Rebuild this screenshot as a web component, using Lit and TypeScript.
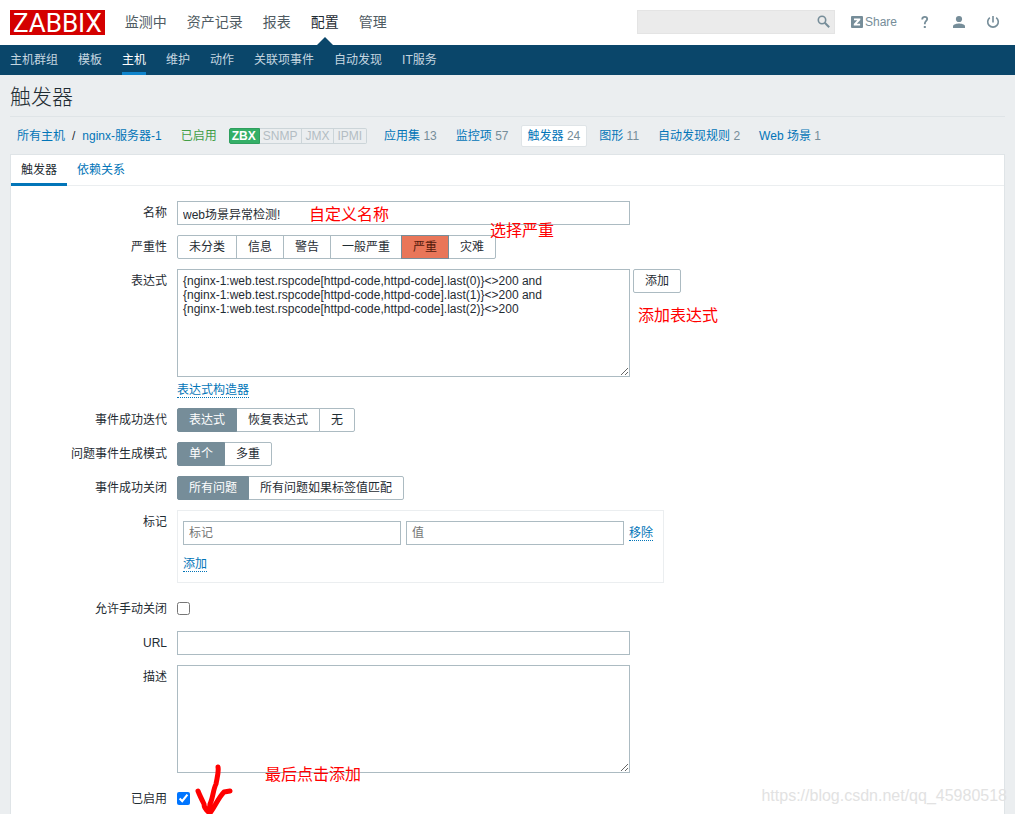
import { LitElement, html, css, svg } from "lit";
import { customElement, property, state } from "lit/decorators.js";
import { classMap } from "lit/directives/class-map.js";

const base = css`
  *,
  *::before,
  *::after {
    box-sizing: border-box;
  }
  a {
    color: #0275b8;
    text-decoration: none;
  }
  ul {
    list-style: none;
    margin: 0;
    padding: 0;
  }
`;

interface Choice {
  label: string;
  tone?: string;
}

@customElement("segmented-choice")
export class SegmentedChoice extends LitElement {
  static styles = [
    base,
    css`
      :host {
        display: flex;
      }
      .group {
        display: flex;
        border: 0;
        margin: 0;
        padding: 0;
        min-width: 0;
      }
      .item {
        position: relative;
        height: 24px;
        padding: 0 11px;
        border: 1px solid #acbbc2;
        line-height: 22px;
        background: #fff;
        cursor: pointer;
        white-space: nowrap;
      }
      .item + .item {
        margin-left: -1px;
      }
      .item:first-child {
        border-radius: 2px 0 0 2px;
      }
      .item:last-child {
        border-radius: 0 2px 2px 0;
      }
      .item.on {
        z-index: 1;
        background: #768d99;
        border-color: #768d99;
        color: #fff;
      }
      .item.on.high {
        background: #e97659;
        color: #52190b;
      }
      .radio {
        position: absolute;
        inset: 0;
        width: 100%;
        height: 100%;
        margin: 0;
        opacity: 0;
        cursor: pointer;
      }
    `,
  ];

  @property() label = "";
  @property({ attribute: false }) choices: Choice[] = [];
  @property({ type: Number }) selected = 0;

  render() {
    return html`<div class="group" role="radiogroup" aria-label=${this.label}>
      ${this.choices.map(
        (c, i) => html`<label
          class=${classMap({ item: true, on: i === this.selected, high: c.tone === "high" })}
          ><input
            class="radio"
            type="radio"
            name="choice"
            .checked=${i === this.selected}
            @change=${() => (this.selected = i)}
          />${c.label}</label
        >`
      )}
    </div>`;
  }
}

const severities: Choice[] = [
  { label: "未分类" },
  { label: "信息" },
  { label: "警告" },
  { label: "一般严重" },
  { label: "严重", tone: "high" },
  { label: "灾难" },
];

const hostLinks = [
  { label: "应用集", count: 13 },
  { label: "监控项", count: 57 },
  { label: "触发器", count: 24, current: true },
  { label: "图形", count: 11 },
  { label: "自动发现规则", count: 2 },
  { label: "Web 场景", count: 1 },
];

const expression = [
  "{nginx-1:web.test.rspcode[httpd-code,httpd-code].last(0)}<>200 and",
  "{nginx-1:web.test.rspcode[httpd-code,httpd-code].last(1)}<>200 and",
  "{nginx-1:web.test.rspcode[httpd-code,httpd-code].last(2)}<>200",
].join("\n");

@customElement("app-root")
export class AppRoot extends LitElement {
  static styles = [
    base,
    css`
      :host {
        position: relative;
        display: flex;
        flex-direction: column;
        min-height: 100vh;
        overflow: hidden;
        background: #ebeef0;
        color: #1f2c33;
        font: 12px/14px "Liberation Sans", "Noto Sans CJK SC", sans-serif;
      }
      input,
      textarea,
      button {
        font: inherit;
        color: inherit;
      }

      .header {
        display: flex;
        align-items: center;
        height: 45px;
        padding: 0 15px 1px 10px;
        background: #fff;
      }
      .logo {
        height: 25px;
        padding: 0 3px;
        background: #d40000;
        color: #fff;
        font: 26px/26px Roboto, sans-serif;
      }
      .menu {
        display: flex;
        flex: 1;
        align-self: flex-start;
        gap: 20px;
        margin-left: 20px;
        font-size: 14px;
        line-height: 45px;
      }
      .menu a {
        display: block;
        position: relative;
        color: #4f5b62;
      }
      .menu .current {
        color: #1f2c33;
      }
      .menu .current::after {
        content: "";
        position: absolute;
        left: 50%;
        bottom: 0;
        margin-left: -8px;
        border: 8px solid transparent;
        border-top: 0;
        border-bottom-color: #0a466a;
      }
      .search {
        position: relative;
        width: 198px;
        height: 24px;
        margin-right: 16px;
      }
      .search-box {
        display: block;
        width: 100%;
        height: 24px;
        padding: 0 24px 0 5px;
        border: 1px solid #e4e4e4;
        border-radius: 0;
        background: #ebebeb;
      }
      .search-button {
        position: absolute;
        right: 4px;
        top: 5px;
        width: 14px;
        height: 14px;
        padding: 0;
        border: 0;
        background: none;
      }
      .tools {
        display: flex;
        align-items: center;
        gap: 21px;
      }
      .tools a {
        display: flex;
        align-items: center;
        gap: 2px;
        color: #768d99;
      }
      svg {
        display: block;
      }

      .submenu {
        display: flex;
        gap: 20px;
        height: 30px;
        padding: 0 10px;
        background: #0a466a;
      }
      .submenu a {
        display: block;
        height: 30px;
        line-height: 30px;
        color: #c5d6e0;
        border-bottom: 3px solid transparent;
      }
      .submenu .current {
        color: #fff;
        border-color: #0f84cc;
      }

      .title {
        margin: 0 10px;
        padding: 10px 0 7px;
        border-bottom: 1px solid #dfe4e7;
        font-size: 21px;
        line-height: 24px;
        font-weight: 300;
      }
      .crumbs {
        display: flex;
        flex-wrap: wrap;
        margin: 8px 10px 7px;
        line-height: 20px;
      }
      .crumb {
        padding: 0 6px;
        border: 1px solid transparent;
      }
      .slash {
        padding: 1px 0;
      }
      .status {
        margin-left: 5px;
        color: #429e47;
      }
      .badges {
        display: flex;
        margin: 3px 5px 3px 5px;
        line-height: 14px;
      }
      .badge {
        padding: 0 4px 0 3px;
        border: 1px solid #ccd5d9;
        border-left: 0;
        color: #b3bdc3;
      }
      .badge:first-child {
        padding: 0 3px 0 2px;
        border: 1px solid #2f9f5e;
        border-radius: 2px 0 0 2px;
        background: #34af67;
        color: #fff;
        font-weight: 700;
      }
      .badge:last-child {
        border-radius: 0 2px 2px 0;
      }
      .links {
        display: flex;
        flex-wrap: wrap;
        gap: 5px;
        margin-left: 5px;
      }
      .links .current {
        background: #fff;
        border-color: #dfe4e7;
        border-radius: 2px;
      }
      .count {
        color: #768d99;
      }

      .card {
        flex: 1;
        margin: 0 10px;
        border: 1px solid #dfe4e7;
        border-bottom: 0;
        background: #fff;
      }
      .tabs {
        display: flex;
        height: 31px;
        border-bottom: 1px solid #ebeef0;
      }
      .tabs a {
        height: 31px;
        padding: 0 10px;
        line-height: 30px;
      }
      .tabs .current {
        color: #1f2c33;
        border-bottom: 3px solid #0275b8;
      }

      .form {
        display: grid;
        gap: 10px;
        padding-top: 15px;
      }
      .row {
        display: grid;
        grid-template-columns: 156px minmax(0, 1fr);
        column-gap: 10px;
      }
      .row.tick {
        padding-top: 4px;
      }
      .name {
        line-height: 24px;
        text-align: right;
      }
      .field {
        display: flex;
        gap: 3px;
        align-items: flex-start;
      }
      .field.stack {
        flex-direction: column;
        gap: 6px;
      }
      .line {
        display: flex;
        gap: 3px;
        align-items: flex-start;
        width: 100%;
      }
      .text,
      .area {
        display: block;
        width: 100%;
        max-width: 453px;
        height: 24px;
        margin: 0;
        padding: 0 5px;
        border: 1px solid #acbbc2;
        border-radius: 0;
        background: #fff;
      }
      .area {
        height: 108px;
        padding: 4px 5px;
        line-height: 14px;
      }
      .text::placeholder {
        color: #757575;
      }
      .button {
        height: 24px;
        padding: 0 11px;
        border: 1px solid #acbbc2;
        border-radius: 2px;
        background: #fff;
        line-height: 22px;
        white-space: nowrap;
      }
      .action {
        padding: 0;
        border: 0;
        border-bottom: 1px dotted #0275b8;
        background: none;
        color: #0275b8;
        line-height: 14px;
        white-space: nowrap;
      }
      .tags {
        display: grid;
        justify-items: start;
        gap: 12px;
        padding: 10px 10px 10px 5px;
        border: 1px solid #ebeef0;
      }
      .tag {
        display: flex;
        align-items: center;
        gap: 5px;
      }
      .tag .text {
        width: 218px;
      }
      .check {
        width: 13px;
        height: 13px;
        margin: 5px 0;
      }

      .note {
        position: absolute;
        color: #f00;
        font-size: 16px;
        line-height: 20px;
        white-space: nowrap;
        pointer-events: none;
      }
      .note.custom {
        left: 309px;
        top: 205px;
      }
      .note.pick {
        left: 490px;
        top: 221px;
      }
      .note.expr {
        left: 638px;
        top: 306px;
      }
      .note.finish {
        left: 265px;
        top: 765px;
      }
      .arrow {
        position: absolute;
        left: 190px;
        top: 760px;
        pointer-events: none;
      }
      .watermark {
        position: absolute;
        right: 8px;
        top: 786px;
        color: #e2e2e2;
        font-size: 16px;
        line-height: 20px;
        pointer-events: none;
      }
    `,
  ];

  @state() private manualClose = false;
  @state() private enabled = true;

  private icon(body: unknown, w = 14) {
    return html`<svg width=${w} height="14" viewBox="0 0 ${w} 14" aria-hidden="true">${body}</svg>`;
  }

  private header() {
    return html`<header class="header">
        <a class="logo" href="#">ZABBIX</a>
        <nav class="menu">
          ${["监测中", "资产记录", "报表", "配置", "管理"].map(
            (m) => html`<a href="#" class=${classMap({ current: m === "配置" })}>${m}</a>`
          )}
        </nav>
        <form class="search" @submit=${(e: Event) => e.preventDefault()}>
          <input class="search-box" type="text" aria-label="搜索" />
          <button class="search-button" aria-label="搜索">
            ${this.icon(svg`<circle cx="5" cy="5" r="3.7" fill="none" stroke="#768d99" stroke-width="1.6"/>
              <path d="M7.8 7.8 12.2 12.2" stroke="#768d99" stroke-width="2"/>`)}
          </button>
        </form>
        <div class="tools">
          <a href="#">
            ${this.icon(
              svg`<rect y="1" width="12" height="12" rx="1" fill="#768d99"/>
              <path d="M3 3.5h6.3v1.6L5.8 8.8h3.3v1.8H2.8V9l3.4-3.7H3z" fill="#fff"/>`,
              12
            )}Share</a
          >
          <a href="#" aria-label="帮助">
            ${this.icon(svg`<path d="M4.2 4.4C4.2 2.6 5.3 1.9 6.7 1.9 8.2 1.9 9.2 2.7 9.2 4.1 9.2 5.9 6.8 6.2 6.8 8.8V9.2" fill="none" stroke="#768d99" stroke-width="1.8"/>
              <rect x="5.8" y="11" width="2" height="2" fill="#768d99"/>`)}</a
          >
          <a href="#" aria-label="用户">
            ${this.icon(
              svg`<circle cx="6" cy="4" r="3.1" fill="#768d99"/>
              <path d="M0 13v-1.6C0 9.4 4 8.6 6 8.6s6 .8 6 2.8V13z" fill="#768d99"/>`,
              12
            )}</a
          >
          <a href="#" aria-label="退出">
            ${this.icon(svg`<path d="M7 1v6.5M3.8 2.6a5.3 5.3 0 1 0 6.4 0" fill="none" stroke="#768d99" stroke-width="1.6"/>`)}</a
          >
        </div>
      </header>
      <nav class="submenu">
        ${["主机群组", "模板", "主机", "维护", "动作", "关联项事件", "自动发现", "IT服务"].map(
          (m) => html`<a href="#" class=${classMap({ current: m === "主机" })}>${m}</a>`
        )}
      </nav>`;
  }

  private crumbs() {
    return html`<div class="crumbs">
      <a class="crumb" href="#">所有主机</a><span class="slash">/</span
      ><a class="crumb" href="#">nginx-服务器-1</a>
      <span class="crumb status">已启用</span>
      <span class="badges">
        ${["ZBX", "SNMP", "JMX", "IPMI"].map((b) => html`<span class="badge">${b}</span>`)}
      </span>
      <nav class="links">
        ${hostLinks.map(
          (l) => html`<span class=${classMap({ crumb: true, current: !!l.current })}
            ><a href="#">${l.label}</a> <span class="count">${l.count}</span></span
          >`
        )}
      </nav>
    </div>`;
  }

  private choiceRow(name: string, labels: string[]) {
    return html`<div class="row">
      <span class="name">${name}</span>
      <segmented-choice .label=${name} .choices=${labels.map((label) => ({ label }))}></segmented-choice>
    </div>`;
  }

  private form() {
    return html`<form class="form" @submit=${(e: Event) => e.preventDefault()}>
      <div class="row">
        <label class="name" for="name">名称</label>
        <div class="field"><input class="text" id="name" type="text" value="web场景异常检测!" /></div>
      </div>
      <div class="row">
        <span class="name">严重性</span>
        <segmented-choice .label=${"严重性"} .choices=${severities} .selected=${4}></segmented-choice>
      </div>
      <div class="row">
        <label class="name" for="expression">表达式</label>
        <div class="field stack">
          <div class="line">
            <textarea class="area" id="expression" spellcheck="false" .value=${expression}></textarea>
            <button class="button" type="button">添加</button>
          </div>
          <button class="action" type="button">表达式构造器</button>
        </div>
      </div>
      ${this.choiceRow("事件成功迭代", ["表达式", "恢复表达式", "无"])}
      ${this.choiceRow("问题事件生成模式", ["单个", "多重"])}
      ${this.choiceRow("事件成功关闭", ["所有问题", "所有问题如果标签值匹配"])}
      <div class="row">
        <span class="name">标记</span>
        <div class="field">
          <div class="tags">
            <div class="tag">
              <input class="text" type="text" placeholder="标记" aria-label="标记" />
              <input class="text" type="text" placeholder="值" aria-label="值" />
              <button class="action" type="button">移除</button>
            </div>
            <button class="action" type="button">添加</button>
          </div>
        </div>
      </div>
      <div class="row tick">
        <label class="name" for="manual">允许手动关闭</label>
        <div class="field">
          <input
            class="check"
            id="manual"
            type="checkbox"
            .checked=${this.manualClose}
            @change=${() => (this.manualClose = !this.manualClose)}
          />
        </div>
      </div>
      <div class="row">
        <label class="name" for="url">URL</label>
        <div class="field"><input class="text" id="url" type="text" /></div>
      </div>
      <div class="row">
        <label class="name" for="description">描述</label>
        <div class="field"><textarea class="area" id="description"></textarea></div>
      </div>
      <div class="row tick">
        <label class="name" for="enabled">已启用</label>
        <div class="field">
          <input
            class="check"
            id="enabled"
            type="checkbox"
            .checked=${this.enabled}
            @change=${() => (this.enabled = !this.enabled)}
          />
        </div>
      </div>
    </form>`;
  }

  render() {
    return html`${this.header()}
      <h1 class="title">触发器</h1>
      ${this.crumbs()}
      <main class="card">
        <nav class="tabs">
          <a class="current" href="#">触发器</a>
          <a href="#">依赖关系</a>
        </nav>
        ${this.form()}
      </main>
      <span class="note custom">自定义名称</span>
      <span class="note pick">选择严重</span>
      <span class="note expr">添加表达式</span>
      <span class="note finish">最后点击添加</span>
      <svg class="arrow" width="46" height="54" viewBox="0 0 46 54" aria-hidden="true">
        <path
          d="M28 7C29 12 27 18 26 24 23 30 23 38 20 44L19 53M8 31C10 36 12 40 14 44 14 48 17 51 20 53 25 47 28 38 34 32L40 31"
          fill="none"
          stroke="#f00"
          stroke-width="5"
          stroke-linecap="round"
          stroke-linejoin="round"
        />
      </svg>
      <span class="watermark">https://blog.csdn.net/qq_45980518</span>`;
  }
}
